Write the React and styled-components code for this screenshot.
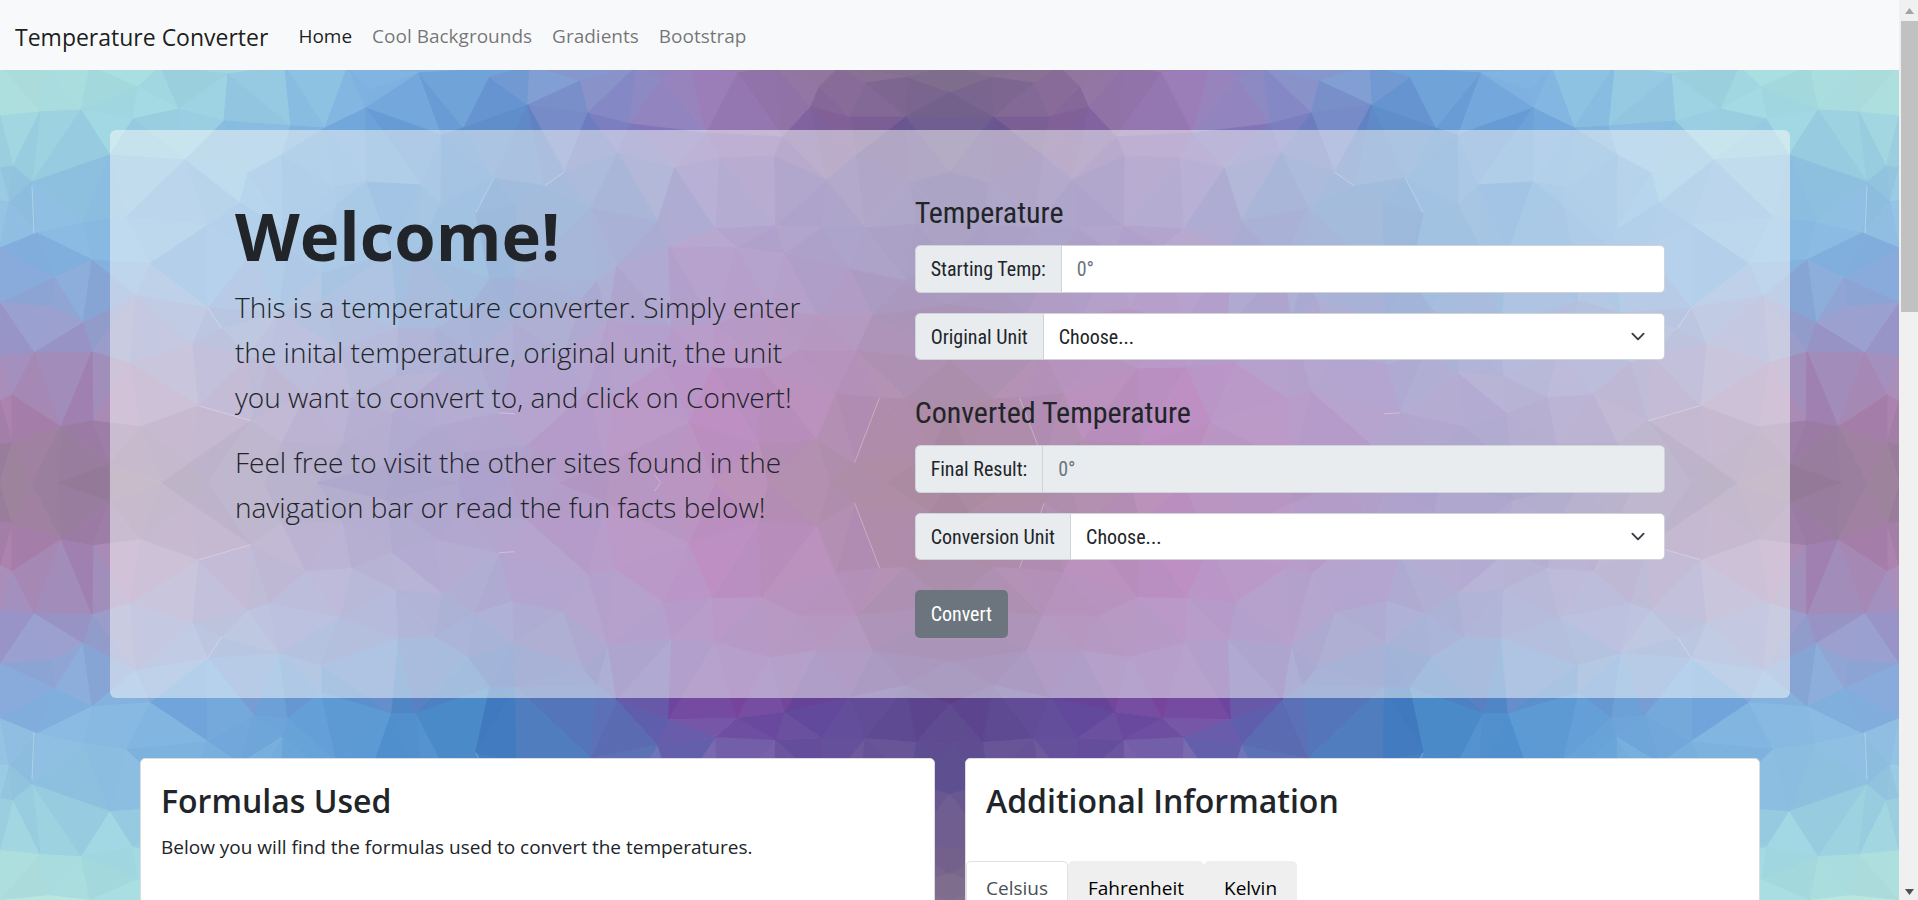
import React, { useState } from "react";
import styled, { createGlobalStyle, css } from "styled-components";

const sans = `"Segoe UI", "Open Sans", "Noto Sans", sans-serif`;
const condensed = `"Roboto Condensed", "Liberation Sans Narrow", Roboto, sans-serif`;

const GlobalStyle = createGlobalStyle`
  *, *::before, *::after { box-sizing: border-box; }
  body {
    margin: 0;
    color: #212529;
    font-family: ${sans};
    font-size: 19px;
    line-height: 30px;
  }
  h1, h2, h3, p { margin: 0; }
`;

/* ---------- low-poly background ---------- */

const QUAD_W = 950;
const QUAD_BOTTOM = 483;

const VERTICES = [
  0,66, 49,71, 90,66, 160,66, 285,66, 348,66, 530,66, 637,66, 690,66, 775,66, 840,66, 950,66,
  0,116, 40,112, 81,110, 138,87, 133,119, 179,109, 228,74, 224,121, 291,126, 325,128, 366,108,
  370,90, 419,73, 442,135, 464,128, 490,77, 528,105, 580,81, 588,113, 630,124, 663,78, 707,133,
  738,73, 811,107, 820,86, 850,117, 866,83, 906,117, 909,77, 950,92, 950,118,
  110,155, 185,160, 13,166, 0,168, 32,182, 0,201, 9,202, 37,233, 83,223, 126,217, 248,173, 282,155,
  334,187, 366,182, 421,185, 494,178, 565,172, 545,186, 618,153, 675,168, 720,158, 775,156,
  783,137, 857,155, 827,180, 911,183, 950,172,
  240,203, 208,225, 283,230, 337,204, 441,205, 476,213, 517,204, 591,208, 658,221, 716,229,
  776,226, 822,228, 866,228, 917,224, 950,222,
  0,248, 55,278, 92,260, 150,264, 254,251, 288,248, 321,274, 391,253, 416,253, 490,279, 516,279,
  617,266, 597,281, 669,247, 737,248, 785,254, 850,269, 906,281, 950,262,
  136,296, 208,308, 222,329, 279,313, 321,301, 398,328, 435,329, 468,309, 514,323, 608,321,
  582,299, 672,327, 715,324, 770,309, 817,316, 873,316, 950,305,
  0,303, 52,307, 83,323, 34,353, 92,352, 0,356, 130,363, 193,344, 248,356, 269,363, 340,349,
  395,377, 442,373, 513,365, 474,353, 563,354, 588,392, 663,364, 713,368, 762,369, 799,351,
  857,351, 906,399, 950,360,
  0,401, 12,395, 61,427, 12,443, 93,421, 141,427, 199,406, 251,421, 306,395, 352,398, 392,414,
  436,427, 499,413, 614,398, 689,423, 836,394, 880,398, 950,410, 0,445,
  110,464, 190,463, 282,443, 343,444, 386,466, 465,453, 527,446, 606,464, 759,444, 817,441,
  855,463, 930,455, 950,448,
  0,483, 32,483, 58,483, 110,483, 162,483, 208,483, 265,483, 318,483, 390,483, 459,483, 510,483,
  560,483, 610,483, 661,483, 715,483, 768,483, 830,483, 888,483, 950,483,
];

const FIELD_X = [0, 120, 240, 360, 480, 600, 720, 840, 950];
const FIELD_Y = [70, 130, 200, 266, 340, 410, 483];
const FIELD = [
  ["b8e4dc", "a9dfdf", "9ad0e0", "85b8e2", "73a6da", "8a96cc", "9d7db5", "8e7399", "83728c"],
  ["a3d8e1", "9dd3e1", "90c4e1", "78abdf", "6295d0", "7b82c2", "9173b5", "7c5b95", "6f608e"],
  ["94c5e2", "8bbde2", "76aede", "5a9ad4", "4788c8", "5678b8", "6d5aa8", "6a559d", "5d5090"],
  ["86aedd", "80b2e0", "70a3da", "5590ce", "4280c2", "5568b2", "7848a0", "604a9c", "5a4088"],
  ["9d96c8", "9797c6", "838fc4", "7480be", "5f6bb5", "6d51a2", "793a98", "733382", "5d2e70"],
  ["aa80ad", "a684b0", "957bb0", "7b6baf", "6f57a7", "793f9d", "87278f", "712175", "611d53"],
  ["957d96", "927a98", "796c96", "63589d", "5d479f", "6b3187", "79277d", "611f53", "57153d"],
].map((row) => row.map((h) => [0, 2, 4].map((i) => parseInt(h.slice(i, i + 2), 16))));

const HAIRLINES =
  "M32 186L34 233M565 172L545 186M494 178L476 213M208 308L222 329M199 406L251 421M880 398L855 463M499 413L515 414M661 483L655 475";

function locate(stops, value) {
  let i = 0;
  while (i < stops.length - 2 && value > stops[i + 1]) i += 1;
  const t = (value - stops[i]) / (stops[i + 1] - stops[i]);
  return [i, Math.min(1, Math.max(0, t))];
}

function fieldColor(x, y, seed) {
  const [i, s] = locate(FIELD_X, x);
  const [j, t] = locate(FIELD_Y, y);
  const wave = Math.sin(seed * 12.9898) * 43758.5453;
  const shade = (wave - Math.floor(wave) - 0.5) * 12;
  const rgb = [0, 1, 2].map((c) => {
    const top = FIELD[j][i][c] * (1 - s) + FIELD[j][i + 1][c] * s;
    const low = FIELD[j + 1][i][c] * (1 - s) + FIELD[j + 1][i + 1][c] * s;
    return Math.round(top * (1 - t) + low * t + shade * (c === 2 ? 0.5 : 1));
  });
  return `rgb(${rgb.join(",")})`;
}

function circumcircle(a, b, c) {
  const d = 2 * (a[0] * (b[1] - c[1]) + b[0] * (c[1] - a[1]) + c[0] * (a[1] - b[1]));
  if (Math.abs(d) < 1e-9) return { x: 0, y: 0, r: Infinity };
  const [A, B, C] = [a, b, c].map((p) => p[0] * p[0] + p[1] * p[1]);
  const x = (A * (b[1] - c[1]) + B * (c[1] - a[1]) + C * (a[1] - b[1])) / d;
  const y = (A * (c[0] - b[0]) + B * (a[0] - c[0]) + C * (b[0] - a[0])) / d;
  return { x, y, r: (a[0] - x) ** 2 + (a[1] - y) ** 2 };
}

function triangulate(flat) {
  const pts = [];
  for (let i = 0; i < flat.length; i += 2) pts.push([flat[i], flat[i + 1]]);
  const n = pts.length;
  pts.push([-90000, -70000], [90000, -70100], [300, 110000]);
  const make = (a, b, c) => ({ v: [a, b, c], o: circumcircle(pts[a], pts[b], pts[c]) });
  let tris = [make(n, n + 1, n + 2)];
  for (let p = 0; p < n; p += 1) {
    const edges = new Map();
    const keep = [];
    tris.forEach((tri) => {
      const inside = (pts[p][0] - tri.o.x) ** 2 + (pts[p][1] - tri.o.y) ** 2 < tri.o.r;
      if (!inside) {
        keep.push(tri);
        return;
      }
      [[0, 1], [1, 2], [2, 0]].forEach(([i, j]) => {
        const a = Math.min(tri.v[i], tri.v[j]);
        const b = Math.max(tri.v[i], tri.v[j]);
        const key = `${a}-${b}`;
        if (edges.has(key)) edges.delete(key);
        else edges.set(key, [a, b]);
      });
    });
    edges.forEach(([a, b]) => keep.push(make(a, b, p)));
    tris = keep;
  }
  return tris.filter((t) => t.v.every((i) => i < n)).map((t) => t.v.map((i) => pts[i]));
}

const FACETS = triangulate(VERTICES).map((tri, index) => {
  const cx = (tri[0][0] + tri[1][0] + tri[2][0]) / 3;
  const cy = (tri[0][1] + tri[1][1] + tri[2][1]) / 3;
  return { points: tri.map((p) => p.join(",")).join(" "), fill: fieldColor(cx, cy, index + 1) };
});

const Mesh = styled.svg`
  position: absolute;
  top: 0;
  left: 0;
  width: 100%;
  height: auto;
  z-index: -1;
`;

function LowPoly() {
  return (
    <Mesh viewBox={`0 70 ${QUAD_W * 2} 1200`} aria-hidden="true">
      <defs>
        <g id="facets">
          {FACETS.map((f) => (
            <polygon key={f.points} points={f.points} fill={f.fill} stroke={f.fill} strokeWidth="1" />
          ))}
          <path d={HAIRLINES} stroke="#fff" strokeOpacity="0.3" strokeWidth="1" fill="none" />
        </g>
        <g id="half">
          <use href="#facets" />
          <use href="#facets" transform={`translate(0 ${QUAD_BOTTOM * 2}) scale(1 -1)`} />
          <use href="#facets" transform="translate(0 834)" />
        </g>
      </defs>
      <use href="#half" />
      <use href="#half" transform={`translate(${QUAD_W * 2} 0) scale(-1 1)`} />
    </Mesh>
  );
}

/* ---------- page frame ---------- */

const Frame = styled.div`
  display: grid;
  grid-template-columns: minmax(0, 1fr) 19px;
  height: 100vh;
  overflow: hidden;
`;

const Page = styled.div`
  display: flex;
  flex-direction: column;
  min-width: 0;
  height: 100vh;
  overflow: hidden;
`;

const ScrollTrack = styled.div`
  display: flex;
  flex-direction: column;
  align-items: center;
  padding: 7px 0 4px 2px;
  background: #f0f0f0;
`;

const ScrollThumb = styled.div`
  width: 100%;
  height: 291px;
  margin: 7px 0 auto;
  background: #c1c1c1;
`;

/* ---------- navigation ---------- */

const Navbar = styled.nav`
  display: flex;
  flex: none;
  align-items: center;
  height: 70px;
  padding: 0 15px;
  background: #f8f9fa;
`;

const Brand = styled.a`
  margin-right: 20px;
  padding-top: 4px;
  color: rgba(0, 0, 0, 0.9);
  font-size: 23px;
  text-decoration: none;
  white-space: nowrap;
`;

const NavList = styled.ul`
  display: flex;
  margin: 0;
  padding: 2px 0 0;
  list-style: none;
`;

const NavLink = styled.a`
  display: block;
  padding: 10px;
  color: ${({ $active }) => ($active ? "rgba(0,0,0,0.9)" : "rgba(0,0,0,0.55)")};
  text-decoration: none;
  white-space: nowrap;
`;

/* ---------- converter ---------- */

const Main = styled.main`
  position: relative;
  z-index: 0;
  flex: 1 0 auto;
  padding: 60px 109px 0 110px;
  overflow: hidden;
`;

const Converter = styled.section`
  display: grid;
  grid-template-columns: 7fr 9fr;
  column-gap: 96px;
  padding: 60px 125px;
  background: rgba(248, 249, 250, 0.5);
  border-radius: 6px;
`;

const Intro = styled.div`
  padding-top: 5px;
`;

const Welcome = styled.h1`
  margin-bottom: 10px;
  font-size: 67px;
  font-weight: 700;
  line-height: 80px;
`;

const Lead = styled.p`
  margin-bottom: 20px;
  font-size: 28px;
  font-weight: 300;
  line-height: 45px;
`;

const Form = styled.form`
  font-family: ${condensed};
  font-size: 20px;
`;

const FormTitle = styled.h2`
  margin: ${({ $spaced }) => ($spaced ? "35px" : "5px")} 0 14px;
  font-size: 30px;
  font-weight: 400;
  line-height: 36px;
`;

const InputGroup = styled.div`
  display: flex;
  height: ${({ $select }) => ($select ? 47 : 48)}px;
  margin-bottom: 20px;
  border: 1px solid #ced4da;
  border-radius: 5px;
  overflow: hidden;
`;

const InputLabel = styled.label`
  display: flex;
  align-items: center;
  padding: 0 15px;
  background: #e9ecef;
  border-right: 1px solid #ced4da;
  white-space: nowrap;
`;

const control = css`
  flex: 1;
  min-width: 0;
  width: 100%;
  height: 100%;
  padding: 0 15px;
  border: 0;
  border-radius: 0;
  outline: 0;
  color: #212529;
  font: inherit;
`;

const TextInput = styled.input`
  ${control}
  background: #fff;
  &:disabled { background: #e9ecef; }
  &::placeholder { color: #6c757d; opacity: 1; }
`;

const SelectBox = styled.div`
  position: relative;
  flex: 1;
`;

const Select = styled.select`
  ${control}
  display: block;
  appearance: none;
  background: #fff;
`;

const Chevron = styled.svg`
  position: absolute;
  top: 15px;
  right: 16px;
  width: 20px;
  height: 15px;
  pointer-events: none;
`;

const ConvertButton = styled.button`
  height: 48px;
  margin-top: 10px;
  padding: 0 16px;
  border: 0;
  border-radius: 5px;
  background: #6c757d;
  color: #fff;
  font: inherit;
  cursor: pointer;
`;

function UnitSelect({ id, label }) {
  return (
    <InputGroup $select>
      <InputLabel htmlFor={id}>{label}</InputLabel>
      <SelectBox>
        <Select id={id} defaultValue="">
          <option value="">Choose...</option>
          <option value="c">Celsius</option>
          <option value="f">Fahrenheit</option>
          <option value="k">Kelvin</option>
        </Select>
        <Chevron viewBox="0 0 16 16" aria-hidden="true">
          <path d="M2 5l6 6 6-6" fill="none" stroke="#343a40" strokeWidth="2" strokeLinecap="round" strokeLinejoin="round" />
        </Chevron>
      </SelectBox>
    </InputGroup>
  );
}

/* ---------- information cards ---------- */

const CardRow = styled.div`
  display: grid;
  grid-template-columns: 1fr 1fr;
  column-gap: 30px;
  padding: 60px 30px 0;
`;

const Card = styled.article`
  min-height: 240px;
  border: 1px solid #dcdcdf;
  border-radius: 5px;
  background: #fff;
`;

const CardBody = styled.div`
  padding: 21px 20px 20px;
`;

const CardTitle = styled.h2`
  margin-bottom: 10px;
  font-size: 32px;
  font-weight: 600;
  line-height: 42px;
`;

const Tabs = styled.div`
  display: flex;
  margin-top: 9px;
`;

const Tab = styled.button`
  height: 48px;
  padding: 5px 19px 0;
  border: 1px solid ${({ $active }) => ($active ? "#dee2e6" : "#efefef")};
  border-bottom: 0;
  border-radius: 5px 5px 0 0;
  background: ${({ $active }) => ($active ? "#fff" : "#efefef")};
  color: ${({ $active }) => ($active ? "#495057" : "#000")};
  font: inherit;
  cursor: pointer;
`;

const LINKS = ["Home", "Cool Backgrounds", "Gradients", "Bootstrap"];
const SCALES = ["Celsius", "Fahrenheit", "Kelvin"];

export default function App() {
  const [scale, setScale] = useState("Celsius");
  return (
    <Frame>
      <GlobalStyle />
      <Page>
        <Navbar>
          <Brand href="#">Temperature Converter</Brand>
          <NavList>
            {LINKS.map((name, i) => (
              <li key={name}>
                <NavLink href="#" $active={i === 0}>{name}</NavLink>
              </li>
            ))}
          </NavList>
        </Navbar>
        <Main>
          <LowPoly />
          <Converter>
            <Intro>
              <Welcome>Welcome!</Welcome>
              <Lead>
                This is a temperature converter. Simply enter the inital temperature, original
                unit, the unit you want to convert to, and click on Convert!
              </Lead>
              <Lead>
                Feel free to visit the other sites found in the navigation bar or read the fun
                facts below!
              </Lead>
            </Intro>
            <Form onSubmit={(e) => e.preventDefault()}>
              <FormTitle>Temperature</FormTitle>
              <InputGroup>
                <InputLabel htmlFor="start">Starting Temp:</InputLabel>
                <TextInput id="start" placeholder="0°" />
              </InputGroup>
              <UnitSelect id="from" label="Original Unit" />
              <FormTitle $spaced>Converted Temperature</FormTitle>
              <InputGroup>
                <InputLabel htmlFor="result">Final Result:</InputLabel>
                <TextInput id="result" placeholder="0°" disabled />
              </InputGroup>
              <UnitSelect id="to" label="Conversion Unit" />
              <ConvertButton type="submit">Convert</ConvertButton>
            </Form>
          </Converter>
          <CardRow>
            <Card>
              <CardBody>
                <CardTitle>Formulas Used</CardTitle>
                <p>Below you will find the formulas used to convert the temperatures.</p>
              </CardBody>
            </Card>
            <Card>
              <CardBody>
                <CardTitle>Additional Information</CardTitle>
              </CardBody>
              <Tabs role="tablist">
                {SCALES.map((name) => (
                  <Tab
                    key={name}
                    type="button"
                    role="tab"
                    aria-selected={scale === name}
                    $active={scale === name}
                    onClick={() => setScale(name)}
                  >
                    {name}
                  </Tab>
                ))}
              </Tabs>
            </Card>
          </CardRow>
        </Main>
      </Page>
      <ScrollTrack aria-hidden="true">
        <svg width="9" height="7" viewBox="0 0 18 14"><path d="M0 14L9 2L18 14Z" fill="#a3a3a3" /></svg>
        <ScrollThumb />
        <svg width="9" height="7" viewBox="0 0 18 14"><path d="M0 0L9 12L18 0Z" fill="#505050" /></svg>
      </ScrollTrack>
    </Frame>
  );
}
